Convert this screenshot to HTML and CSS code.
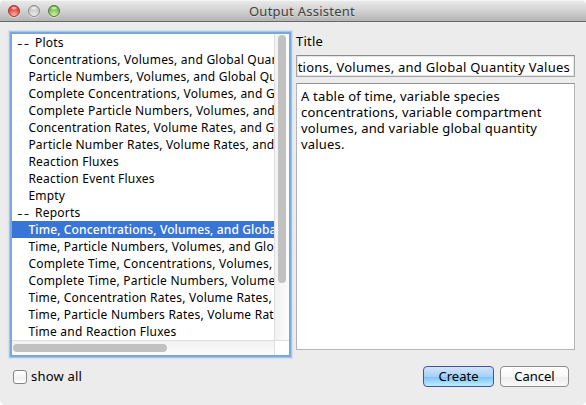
FILE: index.html
```html
<!DOCTYPE html>
<html lang="en">
<head>
<meta charset="utf-8">
<title>Output Assistent</title>
<link rel="stylesheet" href="styles.css">
</head>
<body>
<div class="window">
  <header class="titlebar">
    <div class="lights"><i class="light red"></i><i class="light gray"></i><i class="light green"></i></div>
    <h1>Output Assistent</h1>
  </header>
  <main class="content">
    <section class="list">
      <ul class="rows">
        <li class="group"><span class="dashes">--</span>Plots</li>
        <li>Concentrations, Volumes, and Global Quantity Values</li>
        <li>Particle Numbers, Volumes, and Global Quantity Values</li>
        <li>Complete Concentrations, Volumes, and Global Quantity Values</li>
        <li>Complete Particle Numbers, Volumes, and Global Quantity Values</li>
        <li>Concentration Rates, Volume Rates, and Global Quantity Rates</li>
        <li>Particle Number Rates, Volume Rates, and Global Quantity Rates</li>
        <li>Reaction Fluxes</li>
        <li>Reaction Event Fluxes</li>
        <li>Empty</li>
        <li class="group"><span class="dashes">--</span>Reports</li>
        <li class="selected">Time, Concentrations, Volumes, and Global Quantity Values</li>
        <li>Time, Particle Numbers, Volumes, and Global Quantity Values</li>
        <li>Complete Time, Concentrations, Volumes, and Global Quantity Values</li>
        <li>Complete Time, Particle Numbers, Volumes, and Global Quantity Values</li>
        <li>Time, Concentration Rates, Volume Rates, and Global Quantity Rates</li>
        <li>Time, Particle Numbers Rates, Volume Rates, and Global Quantity Rates</li>
        <li>Time and Reaction Fluxes</li>
      </ul>
      <div class="vbar"><i class="thumb"></i></div>
      <div class="hbar"><i class="thumb"></i></div>
      <div class="corner"></div>
    </section>
    <section class="detail">
      <label class="caption">Title</label>
      <div class="field"><span>Time, Concentrations, Volumes, and Global Quantity Values</span></div>
      <div class="description">A table of time, variable species<br>concentrations, variable compartment<br>volumes, and variable global quantity<br>values.</div>
    </section>
  </main>
  <footer class="actions">
    <label class="check"><i class="box"></i><span>show all</span></label>
    <div class="buttons">
      <button class="primary">Create</button>
      <button>Cancel</button>
    </div>
  </footer>
</div>
</body>
</html>
```
FILE: styles.css
```css
* { box-sizing: border-box; }
body {
  margin: 0;
  background: #fff;
  font-family: "Noto Sans", sans-serif;
  font-size: 13px;
  color: #000;
  overflow: hidden;
}
.window {
  width: 586px;
  height: 405px;
  background: #ececec;
  border-radius: 5px;
  overflow: hidden;
  display: flex;
  flex-direction: column;
}
.titlebar {
  height: 22px;
  flex: none;
  display: grid;
  grid-template-columns: 80px 1fr 80px;
  align-items: center;
  background: linear-gradient(#ebebeb, #d2d2d2 50%, #b4b4b4);
  border-bottom: 1px solid #686868;
  box-shadow: inset 0 1px #f5f5f5;
}
.titlebar h1 {
  margin: 0 0 0 18px;
  text-align: center;
  font-size: 13px;
  line-height: 20px;
  font-weight: 400;
  letter-spacing: .25px;
  color: #404040;
  text-shadow: 0 1px rgba(255, 255, 255, .4);
}
.lights { display: flex; gap: 8px; padding-left: 8px; }
.light {
  width: 12px;
  height: 12px;
  border-radius: 50%;
  border: 1px solid #8b8b8b;
  box-shadow: 0 1px rgba(255, 255, 255, .5);
}
.red { background: radial-gradient(ellipse 4px 2px at 50% 2px, #ffe4df, transparent), radial-gradient(circle at 50% 95%, #ffb3a8, #df4541 65%, #b52c2b); border-color: #9c3a38; }
.gray { background: radial-gradient(ellipse 4px 2px at 50% 2px, #fff, transparent), radial-gradient(circle at 50% 95%, #ededed, #c4c4c4 75%, #aaa); }
.green { background: radial-gradient(ellipse 4px 2px at 50% 2px, #f3ffe9, transparent), radial-gradient(circle at 50% 95%, #d2f5a8, #7dbb55 65%, #548c35); border-color: #4f7a38; }

.content {
  height: 335px;
  flex: none;
  display: grid;
  grid-template-columns: 277px 279px;
  column-gap: 7px;
  padding: 12px 0 0 12px;
}
.list {
  height: 321px;
  display: grid;
  grid-template-columns: 262px 15px;
  grid-template-rows: 306px 15px;
  background: #fff;
  box-shadow: 0 0 0 2px #78a8dc, 0 0 0 3px #a9c6e6, 0 0 1px 4px #d6e1ee;
}
.rows {
  margin: 0;
  padding: 0;
  list-style: none;
  overflow: hidden;
  font-size: 12px;
  letter-spacing: .22px;
}
.rows li {
  height: 17px;
  line-height: 17px;
  padding-left: 16.4px;
  white-space: nowrap;
  overflow: hidden;
}
.rows .group { display: flex; padding-left: 5px; }
.dashes {
  width: 18px;
  font-size: 17px;
  font-weight: 300;
  line-height: 17px;
  letter-spacing: 1.2px;
}
.rows .selected { background: #3875d7; color: #fff; font-weight: 500; letter-spacing: .13px; }
.vbar {
  border-left: 1px solid #dedede;
  background: linear-gradient(90deg, #f2f2f2, #fcfcfc);
  padding: 1px 0 0 3px;
}
.hbar {
  border-top: 1px solid #dedede;
  background: linear-gradient(#f2f2f2, #fcfcfc);
  padding: 3px 0 0 1px;
}
.thumb { display: block; border-radius: 4px; background: #c1c1c1; }
.vbar .thumb { width: 8px; height: 248px; }
.hbar .thumb { width: 154px; height: 8px; }
.corner { border: solid #dedede; border-width: 1px 0 0 1px; background: #fff; }

.detail { display: flex; flex-direction: column; }
.caption { height: 21px; line-height: 15px; letter-spacing: .2px; }
.field {
  height: 22px;
  display: flex;
  justify-content: flex-end;
  overflow: hidden;
  background: #fff;
  border: 1px solid #a5a5a5;
  border-top-color: #8b8b8b;
  padding-right: 4px;
  margin-bottom: 6px;
  line-height: 22px;
  letter-spacing: .25px;
  white-space: nowrap;
  box-shadow: inset 0 0 1px 1px #e4e4e4;
}
.description {
  height: 267px;
  background: #fff;
  border: 1px solid #b4b4b4;
  border-top-color: #929292;
  padding: 4px;
  line-height: 16px;
  letter-spacing: .19px;
  white-space: nowrap;
}
.actions {
  flex: 1;
  display: flex;
  justify-content: space-between;
  align-items: flex-start;
  padding: 9px 17px 0 13px;
}
.check { display: flex; gap: 4px; align-items: center; height: 21px; letter-spacing: .2px; }
.check span { line-height: 18px; margin-bottom: 2px; }
.box {
  width: 14px;
  height: 14px;
  border: 1px solid #858585;
  border-radius: 3px;
  background: linear-gradient(#fff, #f0f0f0 60%, #fff);
}
.buttons { display: flex; gap: 6px; }
button {
  width: 69px;
  height: 21px;
  padding: 0;
  font: inherit;
  line-height: 17px;
  color: #000;
  border: 1px solid #8c8c8c;
  border-radius: 4px;
  background: linear-gradient(#fff, #f8f8f8 50%, #ececec 51%, #fafafa);
}
.primary {
  width: 71px;
  border-color: #4b4f9f;
  background: linear-gradient(#d2e5f9, #a6d0f7 50%, #80bff5 51%, #b9f0ff);
}
```
